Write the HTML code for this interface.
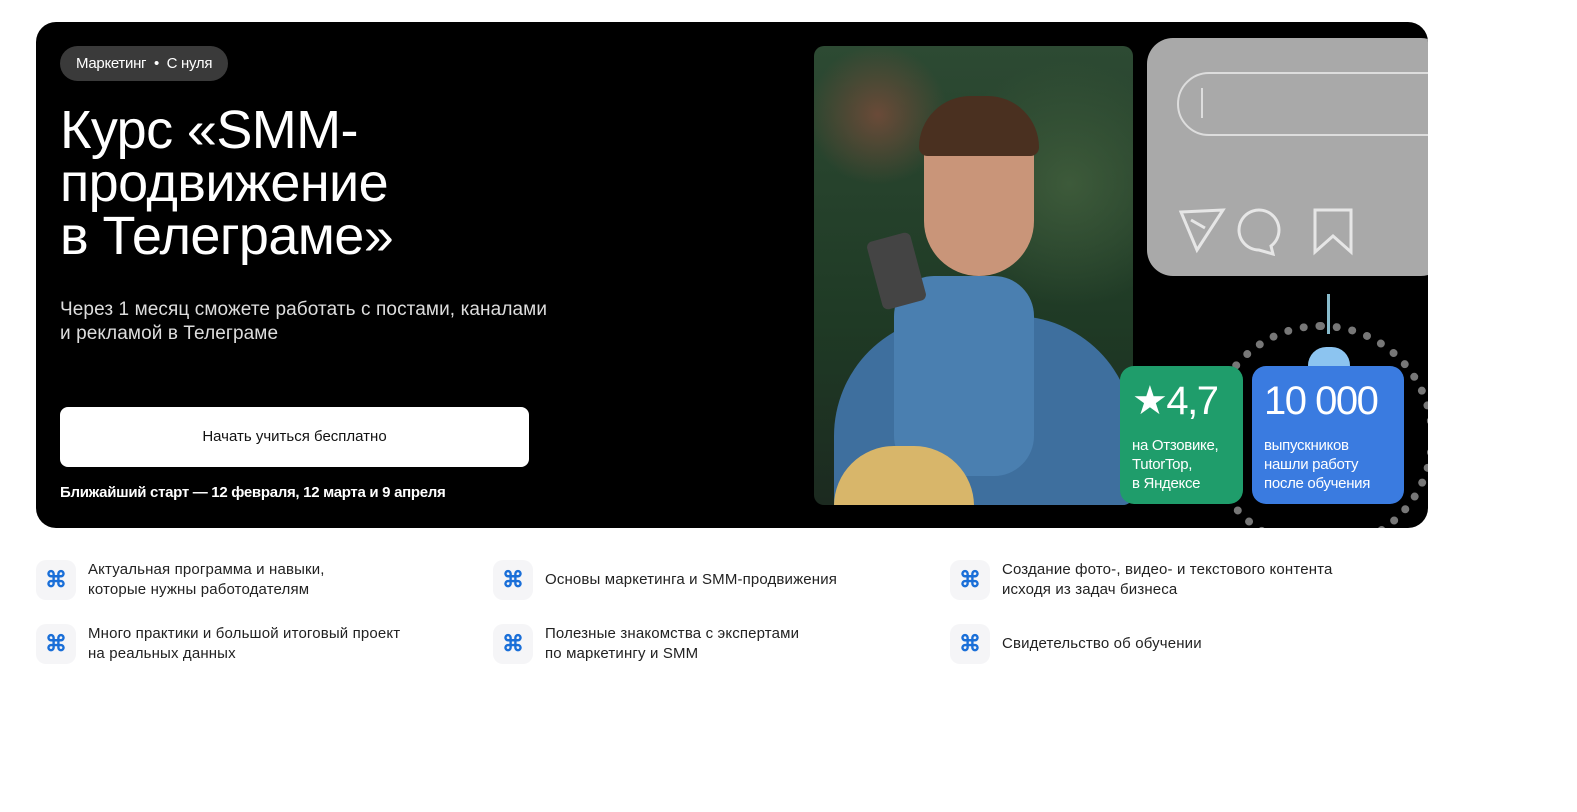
<!DOCTYPE html>
<html><head><meta charset="utf-8"><style>
*{margin:0;padding:0;box-sizing:border-box}
body{width:1577px;height:812px;background:#fff;font-family:"Liberation Sans",sans-serif;position:relative;overflow:hidden}
.banner{position:absolute;left:36px;top:22px;width:1392px;height:506px;background:#000;border-radius:20px;overflow:hidden}
.tag{position:absolute;left:24px;top:24px;height:35px;padding:0 16px;background:#3a3a3a;border-radius:18px;color:#fff;font-size:15px;line-height:35px;letter-spacing:-0.3px}
h1{position:absolute;left:24px;top:82px;color:#fff;font-weight:400;font-size:54px;line-height:53px;letter-spacing:-0.6px}
.sub{position:absolute;left:24px;top:276px;color:#ddd;font-size:19px;line-height:24px;letter-spacing:0.1px}
.btn{position:absolute;left:24px;top:385px;width:469px;height:60px;background:#fff;border-radius:8px;text-align:center;line-height:60px;font-size:15px;color:#111}
.start{position:absolute;left:24px;top:462px;color:#fff;font-size:15px;font-weight:700;letter-spacing:-0.3px}
.photo{position:absolute;left:778px;top:24px;width:319px;height:459px;border-radius:10px;overflow:hidden;background:radial-gradient(circle at 20% 15%,#6a4a38 0,transparent 15%),radial-gradient(circle at 80% 30%,#3d5a3a 0,transparent 30%),linear-gradient(180deg,#2d4a33,#1f3a25 60%,#1c2a20)}
.gray{position:absolute;left:1111px;top:16px;width:300px;height:238px;border-radius:26px;background:#a9a9a9}
.green{position:absolute;left:1084px;top:344px;width:123px;height:138px;border-radius:14px;background:#1f9d6b;color:#fff}
.blue{position:absolute;left:1216px;top:344px;width:152px;height:138px;border-radius:14px;background:#3a7be0;color:#fff}
.big{position:absolute;left:12px;top:12px;font-size:40px;letter-spacing:-1.5px;line-height:46px}
.small{position:absolute;left:12px;top:70px;font-size:15px;line-height:19px;letter-spacing:-0.3px}
.feat{position:absolute;display:flex;align-items:center;font-size:15px;line-height:20px;color:#222;letter-spacing:0.15px}
.ic{width:40px;height:40px;border-radius:10px;background:#f5f5f7;color:#1a6fd8;font-size:22px;font-weight:700;text-align:center;line-height:40px;margin-right:12px;flex:none;letter-spacing:0}
</style></head><body>
<div class="banner">
<div class="tag">Маркетинг &nbsp;•&nbsp; С нуля</div>
<h1>Курс «SMM-<br>продвижение<br>в Телеграме»</h1>
<div class="sub">Через 1 месяц сможете работать с постами, каналами<br>и рекламой в Телеграме</div>
<div class="btn">Начать учиться бесплатно</div>
<div class="start">Ближайший старт — 12 февраля, 12 марта и 9 апреля</div>
<div class="photo">
<div style="position:absolute;left:20px;top:270px;width:300px;height:200px;background:#3e6f9e;border-radius:120px 120px 0 0"></div>
<div style="position:absolute;left:80px;top:230px;width:140px;height:200px;background:#4a7fb0;border-radius:40px"></div>
<div style="position:absolute;left:110px;top:60px;width:110px;height:170px;background:#c99579;border-radius:50px 50px 55px 55px"></div>
<div style="position:absolute;left:105px;top:50px;width:120px;height:60px;background:#4a3020;border-radius:60px 60px 10px 10px"></div>
<div style="position:absolute;left:60px;top:190px;width:45px;height:70px;background:#444;border-radius:6px;transform:rotate(-15deg)"></div>
<div style="position:absolute;left:20px;top:400px;width:140px;height:70px;background:#d8b66a;border-radius:60px 60px 0 0"></div>
</div>
<div class="gray">
<div style="position:absolute;left:30px;top:34px;width:300px;height:64px;border:2px solid #ddd;border-radius:32px"></div>
<div style="position:absolute;left:54px;top:50px;width:2px;height:30px;background:#ddd"></div>
<svg style="position:absolute;left:30px;top:168px" width="180" height="50" fill="none" stroke="#e6e6e6" stroke-width="3"><path d="M4 6L46 4 20 44z M14 14l14 8"/><path d="M82 44a20 20 0 1 1 12-4l2 8z"/><path d="M138 4h36v42l-18-16-18 16z"/></svg>
</div>
<div style="position:absolute;left:1170px;top:300px;width:230px;height:230px;border-radius:50%;border:8px dotted #777"></div>
<div style="position:absolute;left:1291px;top:272px;width:3px;height:40px;background:#8bc"></div>
<div style="position:absolute;left:1272px;top:325px;width:42px;height:22px;background:#8cc4f0;border-radius:20px 20px 4px 4px"></div>
<div class="green"><div class="big">★4,7</div><div class="small">на Отзовике,<br>TutorTop,<br>в Яндексе</div></div>
<div class="blue"><div class="big">10 000</div><div class="small">выпускников<br>нашли работу<br>после обучения</div></div>
</div>
<div class="feat" style="left:36px;top:560px"><div class="ic">⌘</div>Актуальная программа и навыки,<br>которые нужны работодателям</div>
<div class="feat" style="left:493px;top:560px"><div class="ic">⌘</div>Основы маркетинга и SMM-продвижения</div>
<div class="feat" style="left:950px;top:560px"><div class="ic">⌘</div>Создание фото-, видео- и текстового контента<br>исходя из задач бизнеса</div>
<div class="feat" style="left:36px;top:624px"><div class="ic">⌘</div>Много практики и большой итоговый проект<br>на реальных данных</div>
<div class="feat" style="left:493px;top:624px"><div class="ic">⌘</div>Полезные знакомства с экспертами<br>по маркетингу и SMM</div>
<div class="feat" style="left:950px;top:624px"><div class="ic">⌘</div>Свидетельство об обучении</div>
</body></html>
